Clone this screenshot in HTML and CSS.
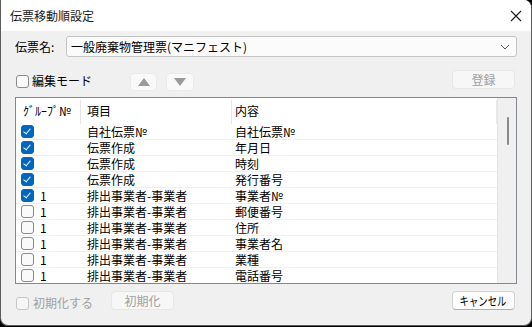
FILE: index.html
```html
<!DOCTYPE html>
<html lang="ja">
<head>
<meta charset="utf-8">
<link rel="stylesheet" href="styles.css">
</head>
<body>
<div class="window">
  <div class="titlebar">
    <span class="title">伝票移動順設定</span>
    <svg class="close" width="12" height="12" viewBox="0 0 12 12"><path d="M1 1 L11 11 M11 1 L1 11" stroke="#1a1a1a" stroke-width="1.1" fill="none"/></svg>
  </div>
  <div class="content">
    <div class="name-row">
      <span class="label">伝票名:</span>
      <div class="combo">
        <span>一般廃棄物管理票(マニフェスト)</span>
        <svg width="10" height="6" viewBox="0 0 10 6"><path d="M1 1 L5 5 L9 1" stroke="#555" stroke-width="1" fill="none"/></svg>
      </div>
    </div>
    <div class="tool-row">
      <label class="check-label"><span class="cb"></span>編集モード</label>
      <button class="arrow up"><svg width="12" height="8" viewBox="0 0 12 8"><path d="M6 0 L12 8 L0 8 Z" fill="#9a9a9a"/></svg></button>
      <button class="arrow down"><svg width="12" height="8" viewBox="0 0 12 8"><path d="M0 0 L12 0 L6 8 Z" fill="#9a9a9a"/></svg></button>
      <button class="btn disabled register">登録</button>
    </div>
    <div class="listview">
      <div class="list-main">
        <div class="header">
          <div class="hcell c1">ｸﾞﾙｰﾌﾟ№</div>
          <div class="hcell c2">項目</div>
          <div class="hcell c3">内容</div>
        </div>
        <div class="row"><div class="cell c1"><span class="cb checked"></span></div><div class="cell c2">自社伝票№</div><div class="cell c3">自社伝票№</div></div>
        <div class="row"><div class="cell c1"><span class="cb checked"></span></div><div class="cell c2">伝票作成</div><div class="cell c3">年月日</div></div>
        <div class="row"><div class="cell c1"><span class="cb checked"></span></div><div class="cell c2">伝票作成</div><div class="cell c3">時刻</div></div>
        <div class="row"><div class="cell c1"><span class="cb checked"></span></div><div class="cell c2">伝票作成</div><div class="cell c3">発行番号</div></div>
        <div class="row"><div class="cell c1"><span class="cb checked"></span><span class="grp">1</span></div><div class="cell c2">排出事業者-事業者</div><div class="cell c3">事業者№</div></div>
        <div class="row"><div class="cell c1"><span class="cb"></span><span class="grp">1</span></div><div class="cell c2">排出事業者-事業者</div><div class="cell c3">郵便番号</div></div>
        <div class="row"><div class="cell c1"><span class="cb"></span><span class="grp">1</span></div><div class="cell c2">排出事業者-事業者</div><div class="cell c3">住所</div></div>
        <div class="row"><div class="cell c1"><span class="cb"></span><span class="grp">1</span></div><div class="cell c2">排出事業者-事業者</div><div class="cell c3">事業者名</div></div>
        <div class="row"><div class="cell c1"><span class="cb"></span><span class="grp">1</span></div><div class="cell c2">排出事業者-事業者</div><div class="cell c3">業種</div></div>
        <div class="row"><div class="cell c1"><span class="cb"></span><span class="grp">1</span></div><div class="cell c2">排出事業者-事業者</div><div class="cell c3">電話番号</div></div>
      </div>
      <div class="scrollbar"><div class="thumb"></div></div>
    </div>
    <div class="bottom-row">
      <label class="check-label disabled-text"><span class="cb disabled"></span>初期化する</label>
      <button class="btn disabled init">初期化</button>
      <button class="btn cancel"><span class="narrow">キャンセル</span></button>
    </div>
  </div>
</div>
</body>
</html>
```
FILE: styles.css
```css
* { box-sizing: border-box; }
html, body { margin: 0; padding: 0; background: #000; }
body {
  width: 532px; height: 327px; overflow: hidden;
  font-family: "Noto Sans CJK JP", "Noto Sans", sans-serif;
  font-size: 12px; color: #000;
}
.window {
  width: 532px; height: 326px;
  background: #f0f0f0;
  border-left: 1px solid #5c5c5c;
  border-right: 1px solid #5c5c5c;
  border-bottom: 1px solid #5c5c5c;
  border-radius: 0 8px 8px 8px;
  overflow: hidden;
  display: flex; flex-direction: column;
}
.titlebar {
  height: 31px; flex: none;
  background: #fff;
  display: flex; align-items: center; justify-content: space-between;
  padding: 0 9px 0 9px;
}
.title { font-size: 12px; line-height: 14px; color: #1a1a1a; }
.content {
  flex: 1;
  padding: 5px 14px 0 14px;
  display: flex; flex-direction: column;
}
.name-row { display: flex; align-items: center; height: 21px; }
.label { width: 51px; line-height: 14px; }
.combo {
  flex: 1; height: 21px;
  background: #fbfbfb;
  border: 1px solid #c4c4c4;
  border-radius: 3px;
  display: flex; align-items: center; justify-content: space-between;
  padding: 0 6px 0 4px;
  line-height: 14px;
}
.tool-row {
  height: 40px; display: flex; align-items: flex-start;
}
.check-label { display: flex; align-items: center; line-height: 14px; }
.tool-row .check-label { margin-left: 1px; margin-top: 17px; }
.cb {
  width: 13px; height: 13px; flex: none;
  border: 1px solid #8a8a8a; border-radius: 3px;
  background: #fafafa;
  margin-right: 3px;
  display: inline-block;
  position: relative;
}
.cb.checked {
  background: #0067c0; border-color: #0067c0;
}
.cb.checked::after {
  content: ""; position: absolute;
  left: 3px; top: 1px; width: 3px; height: 6px;
  border-right: 1.2px solid #fff; border-bottom: 1.2px solid #fff;
  transform: rotate(40deg);
}
.cb.disabled { border-color: #c6c6c6; background: #f6f6f6; }
.disabled-text { color: #a0a0a0; }
button { font-family: inherit; font-size: 12px; padding: 0; }
.arrow {
  height: 18px;
  background: #f9f9f9; border: 1px solid #ebebeb; border-radius: 4px;
  display: flex; align-items: center; justify-content: center;
  margin-top: 16px;
}
.arrow.up { width: 27px; margin-left: 38px; }
.arrow.down { width: 28px; margin-left: 9px; }
.btn {
  width: 63px; height: 19px;
  border-radius: 4px; line-height: 14px;
}
.btn.disabled { background: #f7f7f7; border: 1px solid #e6e6e6; color: #a0a0a0; }
.register { margin-left: auto; margin-right: 2px; margin-top: 13px; }
.listview {
  height: 187px; flex: none;
  border: 1px solid #828790;
  background: #fff;
  display: flex; overflow: hidden;
}
.list-main { flex: 1; overflow: hidden; }
.header { display: flex; height: 26px; }
.hcell {
  line-height: 14px; white-space: nowrap; overflow: hidden;
  border-right: 1px solid #e5e5e5;
  margin-top: 2px; height: 24px; padding-top: 4px;
}
.c1 { width: 65px; flex: none; padding-left: 7px; }
.c2 { width: 151px; flex: none; padding-left: 6px; }
.c3 { flex: 1; padding-left: 3px; }
.hcell.c3 { border-right: 1px solid #e8e8e8; }
.row { display: flex; height: 16px; border-bottom: 1px solid #f0f0f0; line-height: 15px; }
.cell { display: flex; align-items: center; white-space: nowrap; }
.row .c1 { padding-left: 5px; }
.grp { margin-left: 3px; }
.scrollbar {
  width: 19px; flex: none; background: #f0f0f0; position: relative;
  border-left: 1px solid #e6e6e6;
}
.thumb {
  position: absolute; left: 9px; top: 19px; width: 2px; height: 28px;
  background: #8a8a8a; border-radius: 1px;
}
.bottom-row {
  display: flex; align-items: flex-start; height: 41px; padding-top: 7px;
}
.bottom-row .check-label { margin-left: 1px; margin-top: 5px; }
.bottom-row .cb { margin-right: 4px; }
.init { margin-left: 18px; }
.cancel {
  margin-left: auto; margin-right: 2px;
  background: #fdfdfd; border: 1px solid #d0d0d0; border-bottom-color: #b0b0b0;
  color: #000;
}
.narrow { display: inline-block; transform: scaleX(0.78); }
```
